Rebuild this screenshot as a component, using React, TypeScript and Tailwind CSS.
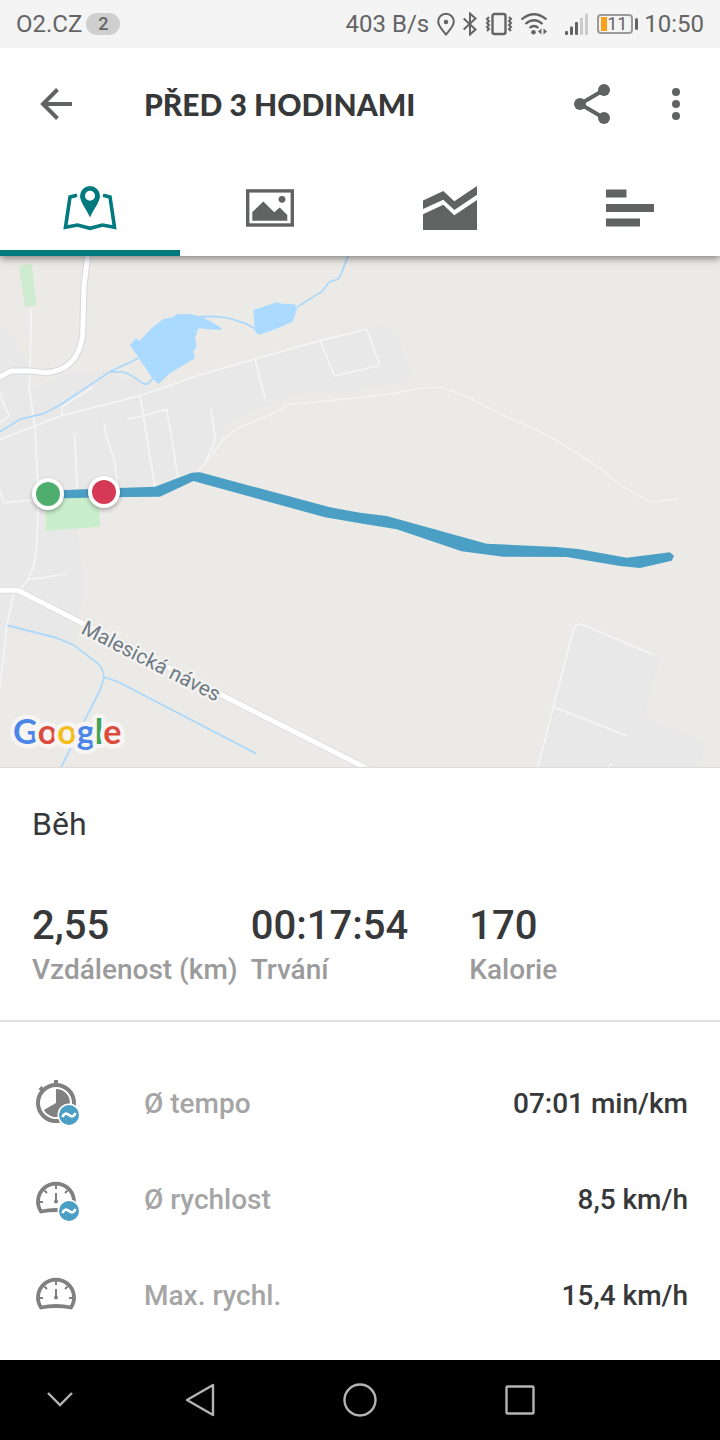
import type { ReactNode } from 'react'

const stats = [
  { value: '2,55', label: 'Vzdálenost (km)' },
  { value: '00:17:54', label: 'Trvání' },
  { value: '170', label: 'Kalorie' },
]

const details = [
  { icon: <StopwatchIcon />, label: 'Ø tempo', value: '07:01 min/km' },
  { icon: <GaugeIcon average />, label: 'Ø rychlost', value: '8,5 km/h' },
  { icon: <GaugeIcon />, label: 'Max. rychl.', value: '15,4 km/h' },
]

export default function App() {
  return (
    <div className="flex min-h-screen flex-col bg-white font-['Roboto',sans-serif] text-[#363839]">
      <StatusBar />
      <header className="relative z-10 bg-white shadow-[0_2px_8px_rgba(0,0,0,0.5)]">
        <div className="flex h-28 items-center px-8">
          <button aria-label="Zpět" className="w-12 shrink-0">
            <BackIcon />
          </button>
          <h1 className="ml-16 flex-1 whitespace-nowrap font-['Lato',sans-serif] text-[30px] leading-10 font-black">
            PŘED 3 HODINAMI
          </h1>
          <div className="flex items-center gap-12">
            <button aria-label="Sdílet">
              <ShareIcon />
            </button>
            <button aria-label="Další možnosti">
              <MoreIcon />
            </button>
          </div>
        </div>
        <nav className="grid grid-cols-4">
          <Tab label="Mapa" active>
            <MapTabIcon />
          </Tab>
          <Tab label="Fotky">
            <PhotoTabIcon />
          </Tab>
          <Tab label="Grafy">
            <ChartTabIcon />
          </Tab>
          <Tab label="Mezičasy">
            <SplitsTabIcon />
          </Tab>
        </nav>
      </header>

      <main>
        <RouteMap />
        <section className="border-b-2 border-[#dfdfdf] px-8 pt-9 pb-[30px]">
          <h2 className="text-[32px] leading-10">Běh</h2>
          <dl className="mt-[58px] grid grid-cols-3">
            {stats.map((s) => (
              <div key={s.label} className="flex flex-col-reverse">
                <dt className="whitespace-nowrap text-[28px] leading-10 font-medium text-[#9b9b9b]">{s.label}</dt>
                <dd className="text-[40px] leading-12 font-medium">{s.value}</dd>
              </div>
            ))}
          </dl>
        </section>
        <dl className="px-8 pt-[34px] pb-4">
          {details.map((d) => (
            <div key={d.label} className="flex h-24 items-center text-[28px] leading-8 font-medium">
              <dt className="flex flex-1 items-center gap-16 text-[#a5a5a5]">
                {d.icon}
                {d.label}
              </dt>
              <dd>{d.value}</dd>
            </div>
          ))}
        </dl>
      </main>

      <SystemNav />
    </div>
  )
}

function Tab({ label, active, children }: { label: string; active?: boolean; children: ReactNode }) {
  return (
    <button
      aria-label={label}
      className={
        active
          ? 'flex h-24 items-center justify-center border-b-6 border-[#00797f] pt-1.5 text-[#00797f]'
          : 'flex h-24 items-center justify-center text-[#616362]'
      }
    >
      {children}
    </button>
  )
}

function StatusBar() {
  return (
    <div className="relative z-20 flex h-12 items-center justify-between bg-[#f4f4f4] px-4 text-2xl text-[#646464]">
      <div className="flex items-center gap-1">
        <span>O2.CZ</span>
        <span className="w-[34px] rounded-full bg-[#cfcfcf] text-center text-lg leading-[22px] font-medium">2</span>
      </div>
      <div className="flex items-center gap-2">
        <span>403 B/s</span>
        <svg width="18" height="24" viewBox="0 0 18 24" fill="none" stroke="currentColor" strokeWidth="2">
          <path d="M9 22.500C6 18.500 1.200 14.500 1.200 9.500a7.800 7.800 0 0 1 15.600 0C16.800 14.500 12 18.500 9 22.500Z" />
          <circle cx="9" cy="10" r="2.300" fill="currentColor" stroke="none" />
        </svg>
        <svg width="14" height="24" viewBox="0 0 14 24" fill="none" stroke="currentColor" strokeWidth="2">
          <path d="M.7 6.500 12.500 17.500 7 22.500V1.500L12.500 6.500.7 17.500" />
        </svg>
        <svg width="28" height="24" viewBox="0 0 28 24" fill="none" stroke="currentColor" strokeWidth="2">
          <rect x="7.500" y="2" width="13" height="20" rx="2" strokeWidth="2.400" />
          <path d="M4 5 2 7l2 2-2 2 2 2-2 2 2 2-2 2M24 5l2 2-2 2 2 2-2 2 2 2-2 2 2 2" />
        </svg>
        <svg width="26" height="24" viewBox="0 0 26 24" fill="none" stroke="currentColor" strokeWidth="2.200">
          <path d="M.5 7.500Q13-3 25.500 7.500M4.500 12Q13 4.500 21.500 12M8.500 16Q13 12 17.500 16" />
          <circle cx="12.500" cy="20.300" r="2.300" fill="currentColor" stroke="none" />
          <path d="m20.500 16.500-3.500 3 3.500 3Zm2 0 3.500 3-3.500 3Z" fill="currentColor" stroke="none" />
        </svg>
        <svg width="24" height="24" viewBox="0 0 24 24" className="ml-2.5" fill="currentColor">
          <rect x="0" y="19" width="3" height="4" rx="1" />
          <rect x="5" y="14.500" width="3" height="8.500" rx="1" />
          <rect x="10" y="10" width="3" height="13" rx="1" />
          <rect x="15" y="5.500" width="3" height="17.500" rx="1" fill="#cbcbcb" />
          <rect x="20" y="1.500" width="3" height="21.500" rx="1" fill="#cbcbcb" />
        </svg>
        <div className="-mr-0.5 flex items-center gap-0.5">
          <div className="flex h-5 w-9 items-center rounded border-2 border-[#9a9a9a] pl-0.5">
            <span className="h-3.5 w-1.5 bg-[#ff9f1a]" />
            <span className="text-lg leading-4">11</span>
          </div>
          <span className="h-3 w-[3px] rounded-full bg-[#646464]" />
        </div>
        <span>10:50</span>
      </div>
    </div>
  )
}

function RouteMap() {
  return (
    <svg viewBox="0 0 2160 1536" className="block h-auto w-full" fill="none" strokeLinejoin="round">
      <rect width="2160" height="1536" fill="#ebeae6" />

      {/* built-up areas */}
      <g fill="#e8e8e8">
        <path d="M0 205 20 215 70 285 95 390 110 395 215 348 335 345 350 370 420 370 450 408 600 355 960 254 1100 218 1130 204 1185 222 1243 372 1175 387 1080 402 870 419 690 500 590 645 300 725 230 822 253 972 250 1032 230 1092 230 1162 20 1122 0 1290Z" />
        <path d="M1720 1122 1740 1104 1980 1202 1933 1380 2122 1462 2095 1536H1613Z" />
      </g>

      <path d="M57 30 95 24 110 148 75 153Z" fill="#cfecd0" />
      <path d="M138 720H296L300 812 138 824Z" fill="#c9eecb" />

      {/* side streets */}
      <g stroke="#f4f5f6" strokeWidth="5">
        <path d="M0 550 104 511 187 478 420 419 600 357 765 309 960 254 1100 220 1138 322 1130 330 1004 360 960 254" />
        <path d="M765 309 796 430M420 419 465 695M380 491 433 478 500 460 535 670M633 457 646 552 617 616" />
        <path d="M311 500 320 545 343 610 352 690M223 532 232 700M187 478 184 454 278 393" />
        <path d="M94 155 90 345 87 390 104 511 116 720 109 887 100 932 84 970 60 1002M84 970 130 965 198 954" />
        <path d="M40 1012 20 1112 0 1292M0 705 12 740 95 732M0 410 10 445 28 478 0 500" />
        <path
          strokeWidth="4"
          d="M590 650 630 605 670 550 710 517 810 476 870 445 1080 425 1180 412 1260 397Q1295 392 1325 395L1410 425 1480 464 1630 532 1700 572 1800 637 1865 690 1940 732Q1955 740 1975 737L2033 729"
        />
        <path d="M1960 1196 1742 1104 1730 1108 1720 1122 1613 1536M1658 1352 1883 1441M1829 1536V1526H1836" />
      </g>

      {/* water */}
      <g stroke="#aad8fb" strokeWidth="5">
        <path d="M0 527 60 490 130 473 180 447 330 347 415 307M330 347 370 348 390 356 430 383 442 385 458 368" />
        <path d="M600 182 640 181 685 186 735 202 770 221M890 154 965 107 988 78 1015 69 1025 50 1048-10" />
        <path d="M22 1108 165 1144 222 1168 295 1224Q314 1244 311 1270L300 1302 182 1536M312 1263 355 1278 769 1493" />
      </g>
      <g fill="#aadaff">
        <path d="M390 267 408 247 418 255 455 217 490 189 520 183 530 175 570 174 605 182 645 203 667 218 660 222 595 217 585 244 590 272 580 286 584 307 510 352 475 384 457 367Z" />
        <path d="M760 162 830 139 845 143 885 145 891 160 878 197 825 220 778 236 765 227Z" />
      </g>

      {/* main roads */}
      <g stroke="#d6d8dc" strokeWidth="21">
        <path d="M264-10 252 92 248 237Q240 290 215 317T140 350L90 345H33L-10 368" />
        <path d="M-10 1003H45L58 1005 245 1100 665 1317 1080 1527 1130 1552" strokeWidth="19" />
      </g>
      <g stroke="#fff" strokeWidth="15">
        <path d="M264-10 252 92 248 237Q240 290 215 317T140 350L90 345H33L-10 368" />
        <path d="M-10 1003H45L58 1005 245 1100 665 1317 1080 1527 1130 1552" />
      </g>
      <text
        x="240"
        y="1130"
        transform="rotate(27 240 1130)"
        fill="#6d7a84"
        stroke="#f3f2f0"
        strokeWidth="14"
        paintOrder="stroke"
        className="font-['Roboto',sans-serif] text-[62px]"
      >
        Malesická náves
      </text>

      {/* recorded track */}
      <path
        fill="#4b9fc5"
        d="M144 704 290 698 465 692 575 650 600 649 990 754 1080 770 1160 780 1460 863 1670 873 1740 880 1880 905 2010 889 2022 900 2015 914 1920 936 1860 930 1700 903 1510 902 1385 886 1190 820 1080 802 975 784 580 675 480 722 312 724 144 728Z"
      />
      <g className="drop-shadow-[0_6px_6px_rgba(0,0,0,0.3)]">
        <circle cx="144" cy="714" r="48" fill="#fff" />
        <circle cx="312" cy="708" r="48" fill="#fff" />
      </g>
      <circle cx="144" cy="714" r="36" fill="#4fae6e" />
      <circle cx="312" cy="708" r="36" fill="#d53953" />

      <text
        x="39"
        y="1464"
        stroke="#f6f5f3"
        strokeWidth="26"
        paintOrder="stroke"
        className="font-['Lato',sans-serif] text-[102px] font-bold"
      >
        <tspan fill="#4a86e8">G</tspan>
        <tspan fill="#dd4b3e">o</tspan>
        <tspan fill="#f4bd1b">o</tspan>
        <tspan fill="#4a86e8">g</tspan>
        <tspan fill="#3ea557">l</tspan>
        <tspan fill="#dd4b3e">e</tspan>
      </text>
      <path d="M0 1534H2160" stroke="#dedddb" strokeWidth="4" />
    </svg>
  )
}

function SystemNav() {
  return (
    <nav className="mt-auto grid h-20 grid-cols-[3fr_4fr_4fr_4fr_3fr] bg-black text-[#b4b4b4]">
      <button aria-label="Skrýt" className="flex items-center justify-center">
        <svg width="36" height="36" viewBox="0 0 36 36" fill="none" stroke="currentColor" strokeWidth="2.400">
          <path d="m6 11 12 12 12-12" />
        </svg>
      </button>
      <button aria-label="Zpět" className="flex items-center justify-center">
        <svg width="36" height="36" viewBox="0 0 36 36" fill="none" stroke="currentColor" strokeWidth="2.400" strokeLinejoin="round">
          <path d="M31 3v30L5 18Z" />
        </svg>
      </button>
      <button aria-label="Domů" className="flex items-center justify-center">
        <svg width="36" height="36" viewBox="0 0 36 36" fill="none" stroke="currentColor" strokeWidth="2.400">
          <circle cx="18" cy="18" r="15.500" />
        </svg>
      </button>
      <button aria-label="Poslední aplikace" className="flex items-center justify-center">
        <svg width="36" height="36" viewBox="0 0 36 36" fill="none" stroke="currentColor" strokeWidth="2.400">
          <rect x="4.500" y="4.500" width="27" height="27" rx="1" />
        </svg>
      </button>
    </nav>
  )
}

function BackIcon() {
  return (
    <svg width="48" height="48" viewBox="0 0 48 48" fill="none" stroke="#616362" strokeWidth="4">
      <path d="M40 24H11M25.500 9.500 11 24l14.500 14.500" />
    </svg>
  )
}

function ShareIcon() {
  return (
    <svg width="48" height="48" viewBox="0 0 48 48" fill="#616362">
      <path d="M36 10 12 24l24 14" fill="none" stroke="#616362" strokeWidth="4" />
      <circle cx="36" cy="10" r="6" />
      <circle cx="12" cy="24" r="6" />
      <circle cx="36" cy="38" r="6" />
    </svg>
  )
}

function MoreIcon() {
  return (
    <svg width="24" height="48" viewBox="0 0 24 48" fill="#616362">
      <circle cx="12" cy="12" r="4" />
      <circle cx="12" cy="24" r="4" />
      <circle cx="12" cy="36" r="4" />
    </svg>
  )
}

function MapTabIcon() {
  return (
    <svg width="56" height="48" viewBox="0 0 56 48" fill="none">
      <path
        d="M15 11.300 8 13 3.500 43.300 15.500 41 28 44.300 40.500 41l12 2.300L48 13l-7-1.700"
        stroke="currentColor"
        strokeWidth="3.600"
      />
      <path
        d="M28 33.500C25 26 18 18 18 12a10 10 0 0 1 20 0C38 18 31 26 28 33.500ZM28 6.800a5 5 0 1 0 0 10 5 5 0 0 0 0-10Z"
        fill="currentColor"
        fillRule="evenodd"
      />
    </svg>
  )
}

function PhotoTabIcon() {
  return (
    <svg width="56" height="48" viewBox="0 0 56 48" fill="currentColor">
      <rect x="5.700" y="6.900" width="44.600" height="34.100" fill="none" stroke="currentColor" strokeWidth="3.400" />
      <path d="M10.300 36.700V28l11-10.400 11 10.700 5.400-4.700 7.600 7.400v5.700Z" />
      <circle cx="40" cy="15.300" r="3.400" />
    </svg>
  )
}

function ChartTabIcon() {
  return (
    <svg width="56" height="48" viewBox="0 0 56 48" fill="currentColor">
      <path d="M1 14.500 21.300 5l11 10.300L55 0v8.700L32.300 24l-11-10.300L1 23Z" transform="translate(0 2)" />
      <path d="M1 30.300 21.300 20.700l11 10.600L55 16v30H1Z" />
    </svg>
  )
}

function SplitsTabIcon() {
  return (
    <svg width="56" height="48" viewBox="0 0 56 48" fill="currentColor">
      <path d="M4 5.500h20.500v8H4ZM4 20h48v8H4ZM4 34.500h34v8H4Z" />
    </svg>
  )
}

function AverageBadge() {
  return (
    <g stroke="none">
      <circle cx="37" cy="36" r="11.500" fill="#fff" />
      <circle cx="37" cy="36" r="10" fill="#4b9fc5" />
      <path d="M30.500 38c1.500-4 4-4 6.500-2s5 2 6.500-2" fill="none" stroke="#fff" strokeWidth="2.800" />
    </g>
  )
}

function StopwatchIcon() {
  return (
    <svg width="48" height="48" viewBox="0 1 48 48" fill="none">
      <circle cx="24" cy="24" r="18" stroke="#808080" strokeWidth="4" />
      <path d="M24 1v5M8 8.500l4 4" stroke="#808080" strokeWidth="4" />
      <path d="M24 24V10a14 14 0 1 1-12.100 21Z" fill="#808080" />
      <AverageBadge />
    </svg>
  )
}

function GaugeIcon({ average }: { average?: boolean }) {
  return (
    <svg width="48" height="48" viewBox="0 1 48 48" fill="none" stroke="#808080">
      <path d="M9 36.500a18 18 0 1 1 30 0Q24 33.500 9 36.500Z" strokeWidth="3.800" />
      <path d="M24 10v4M7 27h4M37 27h4M12.500 15.500l2.500 2.500M35.500 15.500 33 18M24 18v8" strokeWidth="2" />
      <circle cx="24" cy="26.500" r="2" fill="#808080" stroke="none" />
      {average && <AverageBadge />}
    </svg>
  )
}
